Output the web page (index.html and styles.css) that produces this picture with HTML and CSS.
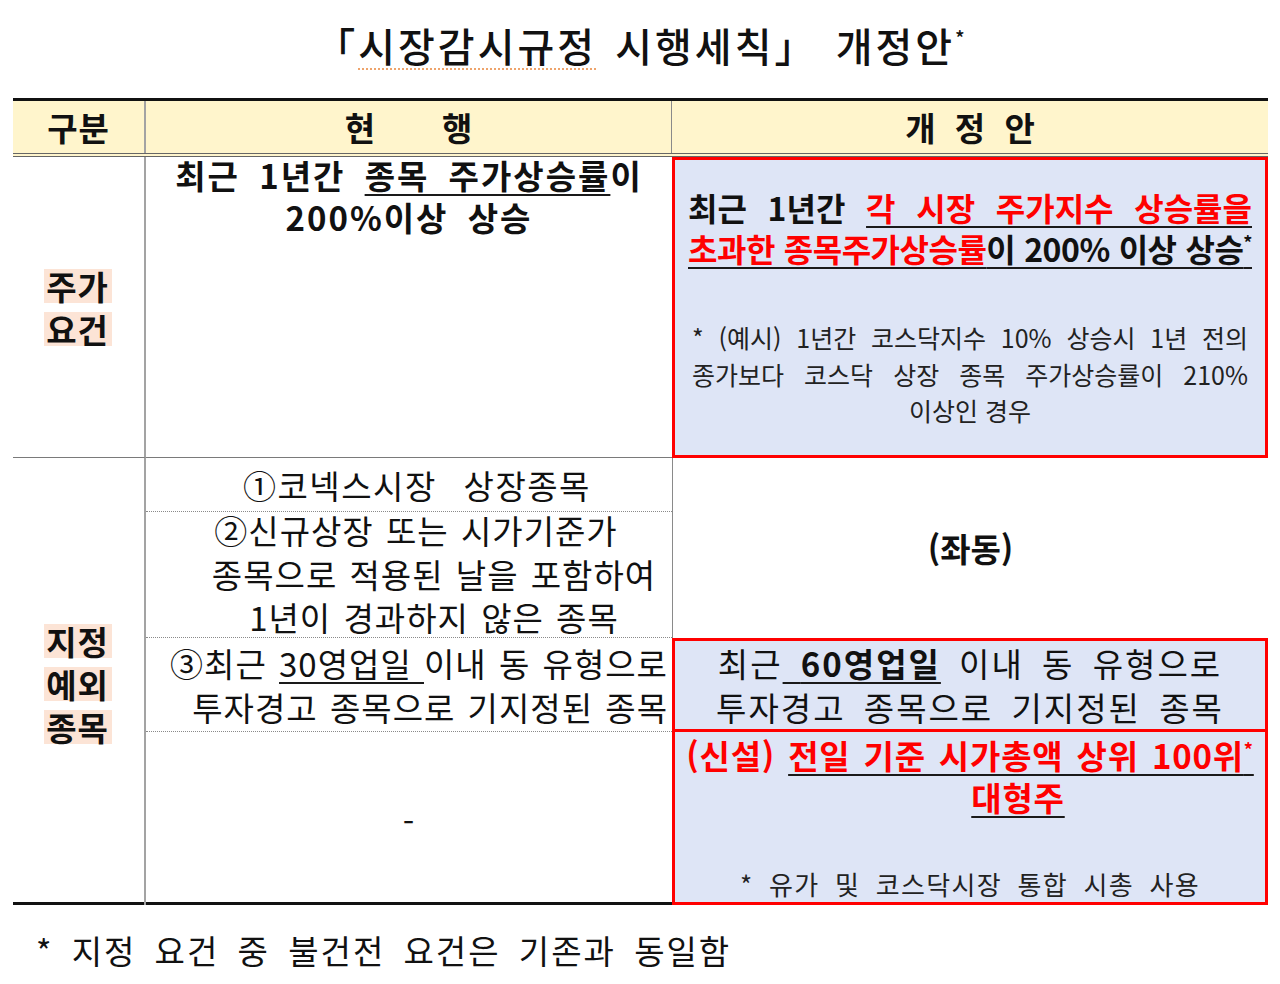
FILE: index.html
```html
<!DOCTYPE html>
<html lang="ko">
<head>
<meta charset="utf-8">
<title>시장감시규정 시행세칙 개정안</title>
<link rel="stylesheet" href="styles.css">
</head>
<body>
<div class="page">
  <h1 class="title">「<span class="squiggle">시장감시규정</span> 시행세칙」 개정안<sup class="tsup">*</sup></h1>

  <div class="tbl">
    <div class="head">
      <div class="hc c1">구분</div>
      <div class="hc c2">현<span class="hgap"></span>행</div>
      <div class="hc c3">개 정 안</div>
    </div>

    <div class="row r1">
      <div class="lbl"><span class="hl">주가</span><span class="hl">요건</span></div>
      <div class="cur1">
        <div class="cur1-in">
          <div>최근 1년간 <u class="ul">종목 주가상승률</u>이</div>
          <div>200%이상 상승</div>
        </div>
      </div>
      <div class="box box1">
        <div class="bold-lines">
          <div class="jl">최근 1년간 <u class="ul red">각 시장 주가지수 상승률을</u></div>
          <div class="jl l2"><u class="ul"><span class="red">초과한 종목주가상승률</span>이 200% 이상 상승<sup class="bsup">*</sup></u></div>
        </div>
        <div class="note">
          <div class="jl">* (예시) 1년간 코스닥지수 10% 상승시 1년 전의</div>
          <div class="jl">종가보다 코스닥 상장 종목 주가상승률이 210%</div>
          <div class="cl">이상인 경우</div>
        </div>
      </div>
    </div>

    <div class="row r2">
      <div class="lbl"><span class="hl">지정</span><span class="hl">예외</span><span class="hl">종목</span></div>
      <div class="cur2">
        <div class="sub s1"><div>①코넥스시장 상장종목</div></div>
        <div class="sub s2">
          <div class="l1">②신규상장 또는 시가기준가</div>
          <div>종목으로 적용된 날을 포함하여</div>
          <div>1년이 경과하지 않은 종목</div>
        </div>
        <div class="sub s3">
          <div>③최근 <u class="ul thin">30영업일 </u>이내 동 유형으로</div>
          <div>투자경고 종목으로 기지정된 종목</div>
        </div>
        <div class="sub s4"><div>-</div></div>
      </div>
      <div class="new2">
        <div class="same">(좌동)</div>
        <div class="box box2">
          <div>최근<u class="ul thin"> <b>60영업일</b></u> 이내 동 유형으로</div>
          <div>투자경고 종목으로 기지정된 종목</div>
        </div>
        <div class="box box3">
          <div class="b3lines">
            <div class="red">(신설) <u class="ul">전일 기준 시가총액 상위 100위<sup class="bsup">*</sup></u></div>
            <div class="red b3l2"><u class="ul">대형주</u></div>
          </div>
          <div class="note2">* 유가 및 코스닥시장 통합 시총 사용</div>
        </div>
      </div>
    </div>
  </div>

  <p class="foot">* 지정 요건 중 불건전 요건은 기존과 동일함</p>
</div>
</body>
</html>
```

FILE: styles.css
```css
* { box-sizing: border-box; }

html, body {
  margin: 0;
  padding: 0;
  background: #ffffff;
}

body {
  width: 1280px;
  overflow: hidden;
  font-family: "Noto Sans CJK KR", "Noto Sans", sans-serif;
  color: #111111;
}

.page {
  padding-left: 13px;
}

/* Title */
.title {
  margin: 0;
  height: 98px;
  padding-top: 20px;
  padding-right: 13px;
  line-height: 50px;
  font-size: 40px;
  font-weight: 500;
  text-align: center;
  letter-spacing: 3px;
  word-spacing: 4px;
}

.squiggle {
  text-decoration: underline dotted #eea46c;
  text-decoration-thickness: 2px;
  text-underline-offset: 6px;
}

.tsup {
  font-size: 20px;
  vertical-align: 16px;
  line-height: 0;
  letter-spacing: 0;
}

/* Table */
.tbl {
  width: 1255px;
  border-top: 3px solid #111111;
  border-bottom: 3px solid #111111;
}

.head,
.row {
  display: grid;
  grid-template-columns: 133px 526px 596px;
}

.head {
  height: 56px;
  background: #fff5cc;
  border-bottom: 4px double #666666;
}

.hc {
  display: flex;
  align-items: center;
  justify-content: center;
  font-size: 33px;
  font-weight: 700;
  line-height: 1;
}

.hc.c1 { border-right: 2px solid #a3a3a3; letter-spacing: 1px; }
.hc.c2 { border-right: 1px solid #8a8a8a; }
.hc.c3 { word-spacing: 10px; }

.hgap {
  display: inline-block;
  width: 67px;
}

/* Label column */
.lbl {
  display: flex;
  flex-direction: column;
  align-items: center;
  justify-content: center;
  gap: 9px;
  border-right: 2px solid #a3a3a3;
  padding-right: 2px;
}

.hl {
  display: block;
  width: 68px;
  height: 34px;
  line-height: 34px;
  background: #fce4d6;
  font-size: 33px;
  font-weight: 700;
  text-align: center;
  letter-spacing: 1px;
}

.r2 .lbl { padding-top: 4px; }

/* Row 1 */
.r1 { height: 301px; }

.r1 .lbl,
.r1 .cur1 {
  border-bottom: 1px solid #7a7a7a;
}

.cur1 {
  font-size: 33px;
  font-weight: 700;
  line-height: 42px;
  text-align: center;
  letter-spacing: 2px;
  word-spacing: 8px;
}

.cur1-in {
  margin-top: -3px;
}

.ul {
  text-decoration: underline;
  text-decoration-color: #1a1a1a;
  text-decoration-thickness: 2px;
  text-underline-offset: 5px;
}

.ul.thin {
  text-decoration-thickness: 1.5px;
  text-underline-offset: 5px;
}

.red { color: #ff0000; }

.box {
  border: 3px solid #ff0000;
  background: #dee5f6;
}

.box1 {
  padding: 27px 13px 0 13px;
}

.bold-lines {
  font-size: 32px;
  font-weight: 700;
  line-height: 41px;
}

.bold-lines .l2 { letter-spacing: -0.5px; }

.jl {
  text-align: justify;
  text-align-last: justify;
  white-space: nowrap;
}

.bsup {
  font-size: 18px;
  vertical-align: 12px;
  line-height: 0;
}

.note {
  margin: 50px 4px 0 4px;
  font-size: 25px;
  line-height: 36.5px;
  color: #222222;
}

.cl { text-align: center; }

/* Row 2 */
.r2 { height: 444px; }

.cur2 {
  display: flex;
  flex-direction: column;
}

.sub {
  display: flex;
  flex-direction: column;
  justify-content: center;
  border-bottom: 1px dotted #8a8a8a;
  font-size: 33px;
  line-height: 44px;
  text-align: center;
  white-space: nowrap;
  letter-spacing: 1px;
  word-spacing: 2px;
}

.s1 {
  height: 54px;
  padding-left: 16px;
  letter-spacing: 1.5px;
  word-spacing: 16px;
}

.s2 {
  height: 126px;
  line-height: 43.5px;
  padding-left: 50px;
}

.s2 .l1 { padding-right: 36px; }

.s3 {
  height: 94px;
  text-align: right;
  padding-right: 4px;
}

.s4 {
  flex: 1;
  border-bottom: none;
  padding-top: 4px;
}

.new2 {
  display: flex;
  flex-direction: column;
}

.same {
  height: 180px;
  border-left: 1px solid #8a8a8a;
  display: flex;
  align-items: center;
  justify-content: center;
  font-size: 33px;
  font-weight: 700;
}

.box2 {
  height: 94px;
  display: flex;
  flex-direction: column;
  justify-content: center;
  font-size: 33px;
  line-height: 44px;
  text-align: center;
  letter-spacing: 2px;
  word-spacing: 7px;
  white-space: nowrap;
}

.box3 {
  flex: 1;
  border-top: none;
  padding-top: 2px;
}

.b3lines {
  font-size: 33px;
  font-weight: 700;
  line-height: 42px;
  text-align: center;
  letter-spacing: 0.8px;
  word-spacing: 3px;
  white-space: nowrap;
}

.b3l2 { padding-left: 96px; }

.note2 {
  margin-top: 48px;
  font-size: 26px;
  line-height: 36px;
  text-align: center;
  letter-spacing: 1.3px;
  word-spacing: 7px;
  color: #222222;
}

/* Footer */
.foot {
  margin: 21px 0 0 23px;
  font-size: 33px;
  line-height: 48px;
  letter-spacing: 2px;
  word-spacing: 7px;
  color: #111111;
}
```
